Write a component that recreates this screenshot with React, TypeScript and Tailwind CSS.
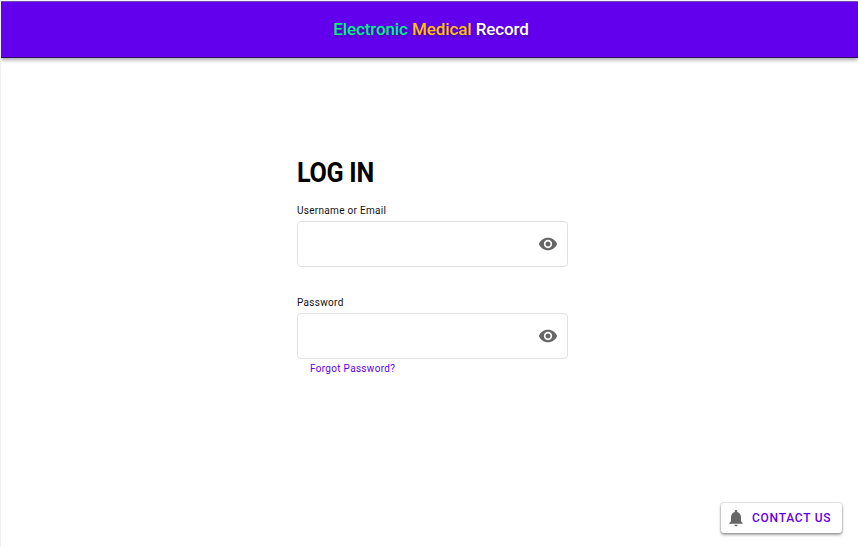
import { MdVisibility, MdNotifications } from "react-icons/md";

function Field({ label, id }: { label: string; id: string }) {
  return (
    <div>
      <label htmlFor={id} className="block h-4 text-[10px] leading-4 tracking-[0.3px] text-[#111]">
        {label}
      </label>
      <div className="mt-[2px] flex h-[46px] w-[271px] items-center rounded-[4px] border border-[#e2e2e2] bg-white pr-[9px]">
        <input id={id} className="h-full min-w-0 flex-1 bg-transparent px-3 text-sm outline-none" />
        <MdVisibility className="size-5 text-[#666]" />
      </div>
    </div>
  );
}

export default function App() {
  return (
    <div className="flex h-[547px] w-[858px] flex-col overflow-hidden border-l border-[#f0f0f0] bg-white font-['Roboto',sans-serif]">
      <header className="mt-px flex h-[57px] shrink-0 items-center justify-center border-t border-b border-t-[#6f4fb0] border-b-[#2b0a66] bg-[#6200ee] shadow-[0_2px_4px_rgba(0,0,0,0.35)]">
        <h1 className="pb-[2px] pl-[3px] text-[17px] font-medium leading-6 tracking-[-0.1px] text-white [text-shadow:0_2px_3px_rgba(0,0,0,0.3)]">
          <span className="text-[#00f285]">Electronic</span> <span className="text-[#ffc107]">Medical</span> Record
        </h1>
      </header>
      <main className="flex flex-1 flex-col pl-[296px] pt-[98px]">
        <h2 className="h-8 origin-left scale-x-[0.93] text-[27px] font-bold leading-[34px] tracking-[-0.3px] text-black">LOG IN</h2>
        <div className="mt-[15px] flex flex-col gap-[28px]">
          <Field label="Username or Email" id="username" />
          <Field label="Password" id="password" />
        </div>
        <a className="ml-[13px] mt-[2px] text-[10px] leading-4 tracking-[0.3px] text-[#6200ee]">Forgot Password?</a>
      </main>
      <footer className="flex justify-end pb-[14px] pr-4">
        <button className="flex h-[30px] w-[121px] items-center rounded-[3px] bg-white pl-[5px] shadow-[0_0_1px_1px_rgba(0,0,0,0.12),0_2px_3px_rgba(0,0,0,0.35)]">
          <MdNotifications className="size-5 shrink-0 text-[#666]" />
          <span className="ml-[6px] whitespace-nowrap text-[12px] font-medium tracking-[0.75px] text-[#6200ee]">CONTACT US</span>
        </button>
      </footer>
    </div>
  );
}
